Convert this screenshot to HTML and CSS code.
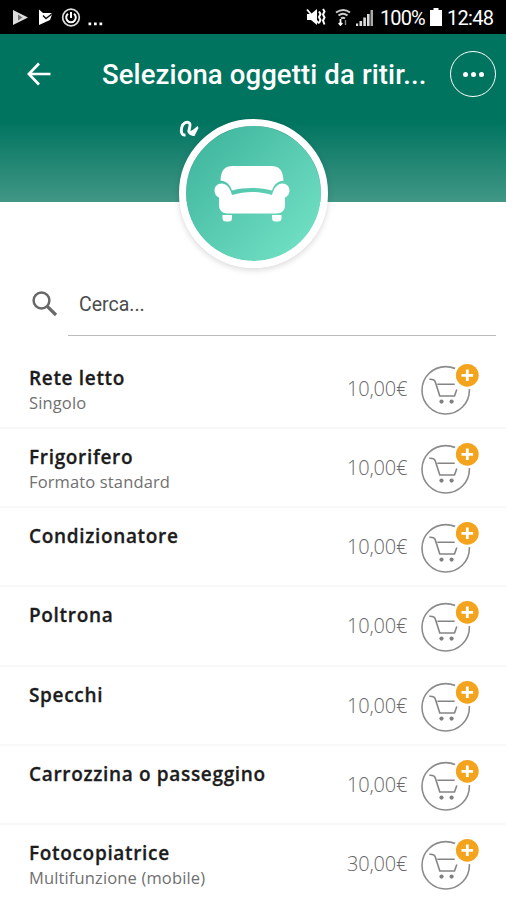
FILE: index.html
```html
<!DOCTYPE html>
<html lang="it">
<head>
<meta charset="utf-8">
<title>Seleziona oggetti</title>
<link rel="stylesheet" href="styles.css">
</head>
<body>
<svg class="defs" aria-hidden="true">
  <symbol id="cart" viewBox="0 0 60 79">
    <circle cx="25.7" cy="40.3" r="23.7" fill="none" stroke="#8c8c8c" stroke-width="1.6"/>
    <path d="M9.3 29.3c3.200-.2 5.200.2 6 2.700L19.800 46H34.500l2.300-6.500M17.300 34.300h17.400" fill="none" stroke="#858585" stroke-width="1.600"/>
    <circle cx="21.5" cy="51.6" r="2.1" fill="#808080"/>
    <circle cx="31.6" cy="51.6" r="2.1" fill="#808080"/>
    <circle cx="47.3" cy="25.3" r="14" fill="#fff"/>
    <circle cx="47.3" cy="25.3" r="11.4" fill="#f4a31c"/>
    <path d="M41.500 25.3h11.600M47.300 19.500v11.600" stroke="#fff" stroke-width="2.800"/>
  </symbol>
</svg>
<div class="status">
  <svg class="status-left" viewBox="0 0 110 34">
    <path d="M13 10l15 7.500-15 7.500z" fill="#ddd"/>
    <path d="M18 14.500l4.500 3-4.500 3z" fill="#777"/>
    <path d="M39 9.500l4 3.500h9.500L50 20l-11 5z" fill="#fff"/>
    <path d="M43 15.500l3 3 7-5.500" fill="none" stroke="#111" stroke-width="1.500"/>
    <circle cx="71" cy="17.500" r="8.300" fill="none" stroke="#ddd" stroke-width="1.700"/>
    <path d="M68 13.700a4.800 4.800 0 1 0 6 0M71 12v6" fill="none" stroke="#fff" stroke-width="2"/>
    <path d="M88.500 22.500h2.700v2.700h-2.700zM94 22.500h2.700v2.700H94zM99.500 22.500h2.700v2.700h-2.700z" fill="#fff"/>
  </svg>
  <div class="status-right">
    <svg class="signals" viewBox="0 0 72 34">
      <path d="M3 14h4l6-5v16l-6-5H3z" fill="#fff"/>
      <path d="M3 9.500l12 14" stroke="#fff" stroke-width="1.800"/>
      <path d="M15 11.500l1.500 2.500-1.500 3 1.500 3-1.500 3M19 9l1.500 2.500-1.500 3 1.500 3-1.500 3 1.500 4" fill="none" stroke="#fff" stroke-width="2"/>
      <path d="M32 12.500q7.500-5 14 0M34.500 15.500q4.500-3.500 9 0M37 18.500q2-1.500 4 0" fill="none" stroke="#ccc" stroke-width="2"/>
      <path d="M36.500 19v6m-1.800-2l1.800 2 1.800-2" fill="none" stroke="#fff" stroke-width="1.700"/>
      <path d="M41.500 25v-5" stroke="#888" stroke-width="1.400"/>
      <path d="M52 23.500h2.200V26H52zM55.500 21h2.600v5h-2.600zM59.300 17.500h2.600V26h-2.600zM63 14h2.600v12H63z" fill="#ddd"/>
      <path d="M66.500 10H69v16h-2.500z" fill="#aaa"/>
    </svg>
    <span class="percent">100%</span>
    <svg class="battery" viewBox="0 0 12 18"><path d="M3.500 0h5v2H12v16H0V2h3.500z" fill="#fff"/></svg>
    <span class="clock">12:48</span>
  </div>
</div>
<header class="header">
  <div class="bar">
    <svg class="back" viewBox="0 0 24 24"><path d="M12 1.500L1.800 12 12 22.500M2 12h21.500" fill="none" stroke="#fff" stroke-width="2.700"/></svg>
    <h1 class="title">Seleziona oggetti da ritir...</h1>
    <div class="more"><i></i><i></i><i></i></div>
  </div>
  <svg class="count" viewBox="0 0 20 20"><path d="M6.500 17C2.500 17.500 1.700 13.500 2.700 9.500 3.800 5 8 3 10.300 5c2 2-.5 5.500-.3 8.500" fill="none" stroke="#fff" stroke-width="2.900"/><path d="M8.300 12.500c2.500 2 6-.5 10.200-4.500l1 2-4 8c-3 0-7-1.500-7.200-5.500z" fill="#fff"/></svg>
  <div class="category">
    <svg class="sofa" viewBox="0 0 76 57">
      <path d="M6.500 15.500C7 5 11 1 19 1h38c8 0 12 4 12.500 14.500-6 .8-9.500 4-11.500 10-13-3.200-26.500-3.200-40 0-2-6-5.500-9.200-11.500-10z"/>
      <path d="M7.500 18.500c5 0 8.500 4 10.500 11.500 13.500-4 26.500-4 40 0 2-7.500 5.500-11.500 10.500-11.500 4 0 7 3 7 7 0 3.500-2 6-4.500 7V40c0 5.500-3.500 8.500-8.500 8.500h-49C8.500 48.500 5 45.500 5 40v-7.500c-2.500-1-4.500-3.500-4.500-7 0-4 3-7 7-7z"/>
      <path d="M8.500 50h9.500v3q0 3.500-3.500 3.500H12Q8.500 56.500 8.500 53zM58 50h9.500v3q0 3.500-3.500 3.500h-2.500Q58 56.500 58 53z"/>
    </svg>
  </div>
</header>
<main>
  <div class="search">
    <svg class="lens" viewBox="0 0 26 26"><circle cx="9.500" cy="9.500" r="7.900" fill="none" stroke="#686868" stroke-width="2.500"/><path d="M15.300 15.300l8.700 8.700" stroke="#686868" stroke-width="3.200"/></svg>
    <div class="field">Cerca...</div>
  </div>
  <ul class="list">
    <li class="row"><div class="info"><b>Rete letto</b><span>Singolo</span></div><span class="price">10,00€</span><svg class="cart"><use href="#cart"/></svg></li>
    <li class="row"><div class="info"><b>Frigorifero</b><span>Formato standard</span></div><span class="price">10,00€</span><svg class="cart"><use href="#cart"/></svg></li>
    <li class="row"><div class="info"><b>Condizionatore</b></div><span class="price">10,00€</span><svg class="cart"><use href="#cart"/></svg></li>
    <li class="row"><div class="info"><b>Poltrona</b></div><span class="price">10,00€</span><svg class="cart"><use href="#cart"/></svg></li>
    <li class="row"><div class="info"><b>Specchi</b></div><span class="price">10,00€</span><svg class="cart"><use href="#cart"/></svg></li>
    <li class="row"><div class="info"><b>Carrozzina o passeggino</b></div><span class="price">10,00€</span><svg class="cart"><use href="#cart"/></svg></li>
    <li class="row"><div class="info"><b>Fotocopiatrice</b><span>Multifunzione (mobile)</span></div><span class="price">30,00€</span><svg class="cart"><use href="#cart"/></svg></li>
  </ul>
</main>
</body>
</html>
```
FILE: styles.css
```css
* { box-sizing: border-box; }
body {
  margin: 0;
  width: 506px;
  height: 900px;
  overflow: hidden;
  background: #fff;
  font-family: "Open Sans", sans-serif;
}
.defs { position: absolute; width: 0; height: 0; }
.status {
  height: 34px;
  background: #000;
  color: #fff;
  display: flex;
  justify-content: space-between;
  font: 400 20px/36px Roboto, sans-serif;
}
.status-left { width: 110px; height: 34px; }
.status-right { display: flex; width: 202px; }
.signals { width: 72px; height: 34px; flex: none; }
.percent { width: 49px; margin-left: 4px; letter-spacing: -0.9px; }
.battery { width: 12px; height: 18px; margin: 8px 4px 0 1px; flex: none; }
.clock { letter-spacing: -0.7px; margin-left: 1px; }
.header {
  position: relative;
  height: 168px;
  background: linear-gradient(#00745f 0, #00745f 52%, #419786 100%);
}
.bar { display: flex; align-items: center; height: 80px; padding: 0 10px 0 27px; }
.back { width: 24px; height: 24px; flex: none; }
.title {
  margin: 2px 0 0 51px;
  width: 348px;
  white-space: nowrap;
  color: #fff;
  font: 500 27.5px/36px Roboto, sans-serif;
  letter-spacing: .12px;
}
.more {
  width: 46px;
  height: 46px;
  flex: none;
  border: 1.5px solid #fff;
  border-radius: 50%;
  display: flex;
  align-items: center;
  justify-content: center;
  gap: 3px;
}
.more i { width: 5px; height: 5px; border-radius: 50%; background: #fff; }
.count { position: absolute; left: 179px; top: 84px; width: 20px; height: 20px; }
.category {
  position: absolute;
  left: 179px;
  top: 85px;
  width: 149px;
  height: 149px;
  border: 7px solid #fff;
  border-radius: 50%;
  background: linear-gradient(135deg, #42b8a0 12%, #70dfc3 88%) padding-box;
  box-shadow: 0 2px 6px rgba(0, 0, 0, .16);
}
.sofa { display: block; width: 76px; height: 57px; margin: 39px auto 0 28px; fill: #fff; }
.search { display: flex; height: 148px; padding: 89px 10px 0 32px; }
.lens { width: 26px; height: 26px; flex: none; }
.field {
  flex: 1;
  height: 45px;
  margin-left: 10px;
  padding-left: 11px;
  border-bottom: 1px solid #bbb;
  color: #4c4c4c;
  font: 400 19.5px/27px Roboto, sans-serif;
}
.list { list-style: none; margin: 0; padding: 0; }
.row {
  display: flex;
  height: 79.15px;
  padding-left: 29px;
  border-bottom: 2px solid #f8f8f8;
}
.info { width: 318px; padding-top: 15px; display: flex; flex-direction: column; }
.info b { font-size: 19px; line-height: 26px; font-weight: 600; color: #1c1c1c; letter-spacing: .67px; -webkit-text-stroke: .3px #1c1c1c; }
.info span { font-size: 16.5px; line-height: 24px; color: #707070; letter-spacing: .14px; }
.price { width: 73px; padding-top: 25px; font-size: 20px; line-height: 28px; font-weight: 300; color: #686868; letter-spacing: -0.2px; }
.cart { width: 60px; height: 79px; flex: none; }
```
